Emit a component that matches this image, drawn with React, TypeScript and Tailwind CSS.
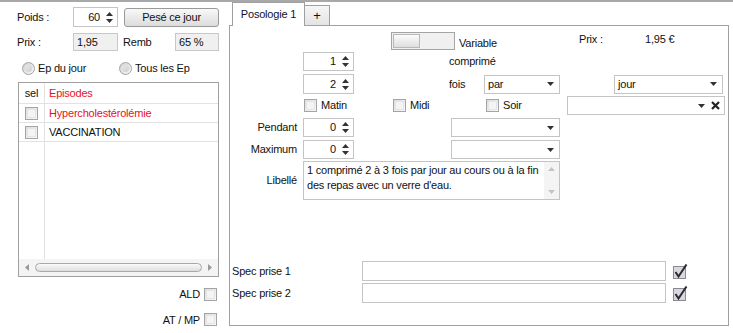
const font = { fontFamily: '"Liberation Sans", Arial, sans-serif' };

const SpinArrows = () => (
  <svg width="7" height="13" viewBox="0 0 7 13" className="shrink-0">
    <path d="M0 5 L3.5 1 L7 5 Z" fill="#333" />
    <path d="M0 8 L3.5 12 L7 8 Z" fill="#333" />
  </svg>
);

const DownArrow = () => (
  <svg width="7" height="4" viewBox="0 0 7 4" className="shrink-0">
    <path d="M0 0 L7 0 L3.5 4 Z" fill="#333" />
  </svg>
);

const SpinBox = ({ value, className }: { value: string; className: string }) => (
  <div
    className={`flex items-center justify-end gap-[6px] border border-[#c4c4c4] bg-white pr-[4px] ${className}`}
  >
    <span>{value}</span>
    <SpinArrows />
  </div>
);

const Combo = ({ text, className }: { text?: string; className: string }) => (
  <div
    className={`flex items-center justify-between border border-[#c4c4c4] bg-white pl-[3px] pr-[5px] ${className}`}
  >
    <span>{text}</span>
    <DownArrow />
  </div>
);

const Check = () => (
  <div className="h-[13px] w-[13px] shrink-0 border border-[#a4a4a4] bg-gradient-to-br from-[#dcdcdc] to-[#fafafa] p-[1px]">
    <div className="h-full w-full border border-[#e4e4e4] bg-[#f4f4f4]" />
  </div>
);

const Radio = () => (
  <div className="flex h-[13px] w-[13px] shrink-0 items-center justify-center rounded-full border border-[#a4a4a4] bg-gradient-to-br from-[#d0d0d0] to-[#f8f8f8]">
    <div className="h-[7px] w-[7px] rounded-full bg-gradient-to-br from-[#e8e8e8] to-[#cfcfcf]" />
  </div>
);

const CheckedIcon = () => (
  <svg width="15" height="15" viewBox="0 0 15 15" className="shrink-0">
    <rect x="0.5" y="2.5" width="12" height="12" fill="#d8d8e0" stroke="#8a8a90" />
    <path d="M2.5 8 L5.5 12.5 L13.5 0.5" fill="none" stroke="#2a2a30" strokeWidth="2" />
  </svg>
);

export default function App() {
  return (
    <div
      className="h-[333px] w-[733px] overflow-hidden bg-white text-[11px] tracking-[-0.2px] text-[#111]"
      style={font}
    >
      <div className="h-[2px] w-full bg-[#a8a8a8]" />
      <div className="flex">
        {/* left column */}
        <div className="flex w-[229px] shrink-0 flex-col">
          <div className="mt-[5px] flex h-[20px] items-center">
            <span className="ml-[17px] w-[56px]">Poids :</span>
            <SpinBox value="60" className="h-[20px] w-[45px]" />
            <div className="ml-[6px] flex h-[19px] w-[95px] items-center justify-center rounded-[3px] border border-[#9a9a9a] bg-gradient-to-b from-[#f8f8f8] to-[#dcdcdc]">
              Pesé ce jour
            </div>
          </div>
          <div className="mt-[6px] flex h-[18px] items-center">
            <span className="ml-[17px] w-[56px]">Prix :</span>
            <div className="flex h-[18px] w-[45px] items-center border border-[#c8c8c8] bg-[#f0f0f0] pl-[3px]">
              1,95
            </div>
            <span className="ml-[5px] w-[52px]">Remb</span>
            <div className="flex h-[18px] w-[44px] items-center border border-[#c8c8c8] bg-[#f0f0f0] pl-[3px]">
              65 %
            </div>
          </div>
          <div className="mt-[10px] flex h-[14px] items-center">
            <div className="ml-[22px] flex w-[97px] items-center gap-[3px]">
              <Radio />
              <span>Ep du jour</span>
            </div>
            <div className="flex items-center gap-[3px]">
              <Radio />
              <span>Tous les Ep</span>
            </div>
          </div>
          <div className="ml-[18px] mt-[7px] flex h-[195px] w-[201px] flex-col border border-[#a0a0a0]">
            <div className="flex h-[21px] border-b border-[#e2e2e2]">
              <div className="flex w-[26px] items-center justify-center border-r border-[#e2e2e2]">sel</div>
              <div className="flex items-center pl-[4px] text-[#e8101c]">Episodes</div>
            </div>
            <div className="flex h-[19px] border-b border-[#e2e2e2]">
              <div className="flex w-[26px] items-center justify-center border-r border-[#e2e2e2]">
                <Check />
              </div>
              <div className="flex items-center pl-[4px] text-[#e8101c]">Hypercholestérolémie</div>
            </div>
            <div className="flex h-[19px] border-b border-[#e2e2e2]">
              <div className="flex w-[26px] items-center justify-center border-r border-[#e2e2e2]">
                <Check />
              </div>
              <div className="flex items-center pl-[4px]">VACCINATION</div>
            </div>
            <div className="flex flex-1">
              <div className="w-[26px] border-r border-[#e2e2e2]" />
            </div>
            <div className="flex h-[17px] items-center bg-[#f4f4f4] px-[6px]">
              <svg width="4" height="7" viewBox="0 0 4 7">
                <path d="M4 0 L0 3.5 L4 7 Z" fill="#9a9a9a" />
              </svg>
              <div className="mx-[6px] h-[9px] flex-1 rounded-full border border-[#a8a8a8] bg-gradient-to-b from-[#fafafa] to-[#dedede]" />
              <svg width="4" height="7" viewBox="0 0 4 7">
                <path d="M0 0 L4 3.5 L0 7 Z" fill="#9a9a9a" />
              </svg>
            </div>
          </div>
          <div className="mt-[9px] flex items-center justify-end gap-[4px] pr-[12px]">
            <span>ALD</span>
            <Check />
          </div>
          <div className="mt-[9px] flex items-center justify-end gap-[4px] pr-[12px]">
            <span>AT / MP</span>
            <Check />
          </div>
        </div>

        {/* right column */}
        <div className="flex w-[500px] flex-col">
          <div className="relative z-10 flex h-[23px] items-end pl-[3px]">
            <div className="-mb-[1px] mt-[2px] flex h-[24px] w-[73px] items-center justify-center border border-b-0 border-[#a0a0a0] bg-white text-[#101030]">
              Posologie 1
            </div>
            <div className="flex h-[20px] w-[25px] items-center justify-center border border-b-0 border-l-0 border-[#a0a0a0] bg-gradient-to-b from-[#f6f6f6] to-[#e4e4e4] text-[13px]">
              +
            </div>
          </div>
          <div className="flex h-[301px] flex-col border border-[#a0a0a0] bg-white">
            {/* row A */}
            <div className="mt-[6px] flex h-[18px] items-start">
              <div className="ml-[161px] flex h-[18px] w-[64px] items-center border border-[#a4a4a4] bg-[#f0f0f0] p-[1px]">
                <div className="h-full w-[27px] border border-[#b8b8b8] bg-gradient-to-b from-[#fcfcfc] to-[#dedede]" />
              </div>
              <span className="ml-[4px] mt-[3px] w-[120px]">Variable</span>
              <span className="-mt-[1px] w-[66px]">Prix :</span>
              <span className="-mt-[1px]">1,95 €</span>
            </div>
            {/* row B */}
            <div className="mt-[2px] flex h-[19px] items-center">
              <SpinBox value="1" className="ml-[73px] h-[19px] w-[51px]" />
              <span className="ml-[95px]">comprimé</span>
            </div>
            {/* row C */}
            <div className="mt-[3px] flex h-[20px] items-center">
              <SpinBox value="2" className="ml-[73px] h-[20px] w-[51px]" />
              <span className="ml-[95px] w-[35px]">fois</span>
              <Combo text="par" className="h-[19px] w-[76px]" />
              <Combo text="jour" className="ml-[54px] h-[19px] w-[109px]" />
            </div>
            {/* row D */}
            <div className="mt-[2px] flex h-[19px] items-start">
              <div className="ml-[74px] mt-[1px] flex w-[89px] items-center gap-[4px]">
                <Check />
                <span>Matin</span>
              </div>
              <div className="mt-[1px] flex w-[93px] items-center gap-[4px]">
                <Check />
                <span>Midi</span>
              </div>
              <div className="mt-[1px] flex w-[81px] items-center gap-[4px]">
                <Check />
                <span>Soir</span>
              </div>
              <div className="flex h-[19px] w-[158px] items-center justify-end gap-[6px] border border-[#c4c4c4] bg-white pr-[4px]">
                <DownArrow />
                <svg width="9" height="9" viewBox="0 0 9 9">
                  <path d="M1 1 L8 8 M8 1 L1 8" stroke="#222" strokeWidth="2.2" />
                </svg>
              </div>
            </div>
            {/* row E */}
            <div className="mt-[3px] flex h-[19px] items-center">
              <span className="w-[67px] text-right">Pendant</span>
              <SpinBox value="0" className="ml-[6px] h-[19px] w-[51px]" />
              <Combo className="ml-[97px] h-[19px] w-[109px]" />
            </div>
            {/* row F */}
            <div className="mt-[3px] flex h-[19px] items-center">
              <span className="w-[67px] text-right">Maximum</span>
              <SpinBox value="0" className="ml-[6px] h-[19px] w-[51px]" />
              <Combo className="ml-[97px] h-[19px] w-[109px]" />
            </div>
            {/* row G */}
            <div className="mt-[2px] flex h-[39px] items-center">
              <span className="w-[67px] text-right">Libellé</span>
              <div className="ml-[6px] flex h-[39px] w-[257px] border border-[#c4c4c4] bg-white">
                <div className="flex-1 pl-[3px] pt-[1px] leading-[15px]">
                  1 comprimé 2 à 3 fois par jour au cours ou à la fin des repas avec un verre d'eau.
                </div>
                <div className="flex w-[15px] flex-col items-center justify-between bg-[#f4f4f4] py-[5px]">
                  <svg width="7" height="4" viewBox="0 0 7 4">
                    <path d="M0 4 L3.5 0 L7 4 Z" fill="#c4c4c4" />
                  </svg>
                  <svg width="7" height="4" viewBox="0 0 7 4">
                    <path d="M0 0 L7 0 L3.5 4 Z" fill="#c4c4c4" />
                  </svg>
                </div>
              </div>
            </div>
            {/* row H */}
            <div className="mt-[61px] flex h-[20px] items-center">
              <span className="ml-[2px] w-[130px]">Spec prise 1</span>
              <div className="h-[20px] w-[304px] border border-[#c4c4c4] bg-white" />
              <div className="ml-[7px]">
                <CheckedIcon />
              </div>
            </div>
            {/* row I */}
            <div className="mt-[2px] flex h-[20px] items-center">
              <span className="ml-[2px] w-[130px]">Spec prise 2</span>
              <div className="h-[20px] w-[304px] border border-[#c4c4c4] bg-white" />
              <div className="ml-[7px]">
                <CheckedIcon />
              </div>
            </div>
          </div>
        </div>
      </div>
    </div>
  );
}
